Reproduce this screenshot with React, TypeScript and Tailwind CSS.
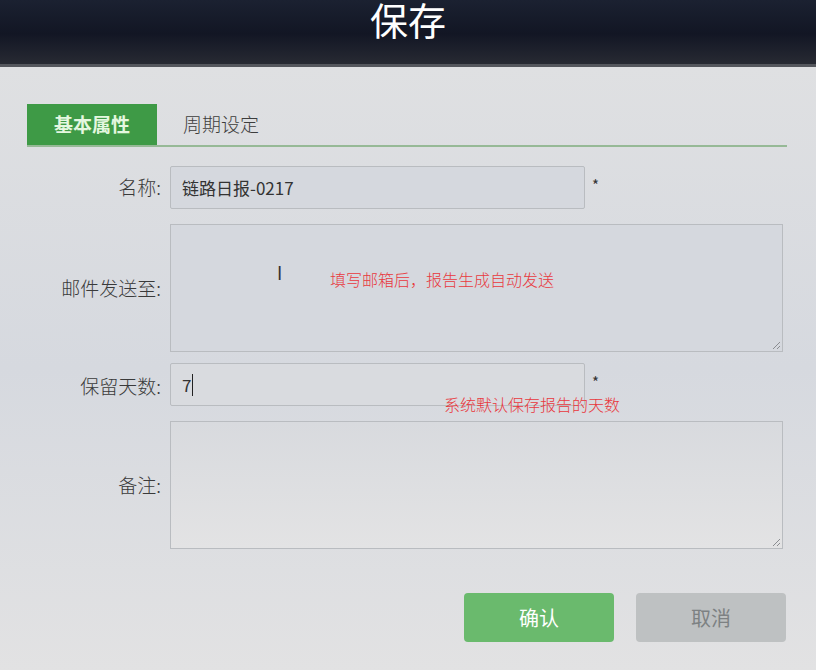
import React from "react";

const font = { fontFamily: '"Noto Sans CJK SC", "Noto Sans", sans-serif' };

function Label({ children }: { children: React.ReactNode }) {
  return (
    <div className="flex items-center justify-end pr-[9px] text-[19px] font-light text-[#3a3a3a]">
      {children}
    </div>
  );
}

export default function App() {
  return (
    <div
      className="flex h-[670px] w-[816px] flex-col overflow-hidden bg-[#e1e1e3]"
      style={font}
    >
      {/* header */}
      <div className="relative flex h-[67px] shrink-0 justify-center bg-gradient-to-b from-[#1b2131] via-[#121624] to-[#2a2c34]">
        <div className="mt-[-12px] text-[38px] leading-[62px] text-white">保存</div>
        <div className="absolute bottom-0 left-0 h-[3px] w-full bg-[#55575d]" />
      </div>

      {/* body */}
      <div className="flex flex-1 flex-col bg-gradient-to-b from-[#dfe0e2] via-[#d6d9df] to-[#e2e2e3] px-[27px] pt-[37px]">
        {/* tabs */}
        <div className="flex h-[43px] w-[760px] border-b-2 border-[#96b996]">
          <div className="flex w-[130px] items-center justify-center bg-[#3e9a46] text-[19px] font-semibold text-[#e4f7df]">
            基本属性
          </div>
          <div className="flex items-center pl-[26px] text-[19px] font-light text-[#3d3d3d]">
            周期设定
          </div>
        </div>

        {/* form */}
        <div className="ml-[-27px] mt-[19px] grid grid-cols-[170px_613px] gap-y-[15px]">
          <Label>名称:</Label>
          <div className="flex items-start">
            <div className="flex h-[43px] w-[415px] items-center rounded-[2px] border border-[#b9bcc0] bg-[#d5d8de] pl-[11px] text-[17px] text-[#333]">
              链路日报-0217
            </div>
            <span className="ml-[7px] mt-[8px] text-[15px] text-[#333]">*</span>
          </div>

          <Label>邮件发送至:</Label>
          <div className="relative h-[128px] border border-[#b9bcc0] bg-[#d5d8de]">
            <span className="absolute left-[106px] top-[38px] text-[18px] leading-none text-[#333]">I</span>
            <span className="absolute left-[159px] top-[46px] text-[16px] font-light leading-none text-[#e8383d]">
              填写邮箱后，报告生成自动发送
            </span>
            <Grip />
          </div>

          <Label>保留天数:</Label>
          <div className="relative mt-[-4px] flex items-start">
            <div className="flex h-[43px] w-[415px] items-center rounded-[2px] border border-[#b9bcc0] bg-[#d9dbdf] pl-[11px] text-[17px] text-[#333]">
              7<span className="ml-[1px] inline-block h-[22px] w-[1px] bg-[#222]" />
            </div>
            <span className="ml-[7px] mt-[8px] text-[15px] text-[#333]">*</span>
            <span className="absolute left-[274px] top-[33px] text-[16px] font-light leading-none text-[#e8383d]">
              系统默认保存报告的天数
            </span>
          </div>

          <Label>备注:</Label>
          <div className="relative h-[128px] border border-[#b9bcc0] bg-gradient-to-b from-[#d8dade] to-[#e3e3e4]">
            <Grip />
          </div>
        </div>

        {/* buttons */}
        <div className="mt-[44px] flex justify-end gap-[22px] pr-[3px]">
          <button className="h-[49px] w-[150px] rounded-[4px] bg-[#6aba6d] text-[20px] text-white">
            确认
          </button>
          <button className="h-[49px] w-[150px] rounded-[4px] bg-[#bec1c2] text-[20px] text-[#7d8183]">
            取消
          </button>
        </div>
      </div>
    </div>
  );
}

function Grip() {
  return (
    <svg className="absolute bottom-[1px] right-[1px]" width="10" height="10" viewBox="0 0 10 10">
      <path d="M9 2 L2 9 M9 6 L6 9" stroke="#8a8c90" strokeWidth="1" />
    </svg>
  );
}
